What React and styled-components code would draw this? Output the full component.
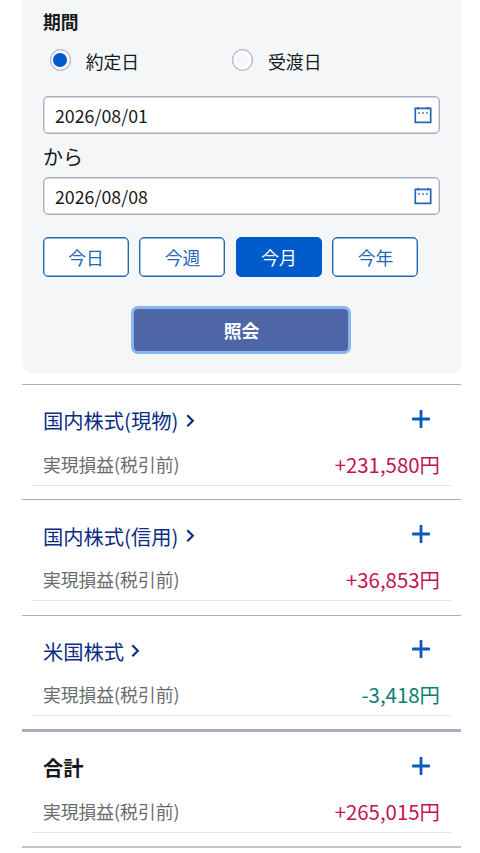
import React, { useState } from 'react';
import styled, { createGlobalStyle } from 'styled-components';

const GlobalStyle = createGlobalStyle`
  * {
    box-sizing: border-box;
  }
  body {
    margin: 0;
    background: #ffffff;
    color: #17191c;
    font-family: 'Noto Sans CJK JP', 'Noto Sans', sans-serif;
    overflow: hidden;
  }
  button {
    font-family: inherit;
    padding: 0;
    cursor: pointer;
  }
`;

const Page = styled.main`
  width: 480px;
  height: 853px;
  padding: 0 18.7px 0 21.6px;
  overflow: hidden;
`;

const SearchPanel = styled.form`
  height: 373px;
  padding: 0 21.4px;
  background: #f4f6f8;
  border-radius: 0 0 9px 9px;
`;

const Heading = styled.h2`
  margin: 0;
  height: 44px;
  font-size: 17.8px;
  font-weight: 700;
  line-height: 42px;
`;

const RadioRow = styled.div`
  display: grid;
  grid-template-columns: 182.3px 1fr;
  height: 52.4px;
  padding-left: 6.6px;
`;

const RadioLabel = styled.label`
  display: flex;
  align-items: center;
  gap: 14.8px;
  height: 32px;
  font-size: 17.8px;
  line-height: 32px;
`;

const RadioMark = styled.span`
  display: grid;
  place-items: center;
  width: 21.4px;
  height: 21.4px;
  border: 1px solid #a7adbb;
  border-radius: 50%;
  background: #ffffff;
  box-shadow: inset 0 0 0 0.3px #a7adbb;

  &::after {
    content: '';
    width: 13.6px;
    height: 13.6px;
    border-radius: 50%;
    background: ${(props) => (props.$checked ? '#005bcb' : '#f6f7f8')};
  }
`;

const RadioText = styled.span`
  padding-top: 2px;
`;

const DateField = styled.div`
  display: flex;
  align-items: center;
  justify-content: space-between;
  height: 38px;
  padding: 0 6.6px 0 11px;
  border: 1px solid #a9adbd;
  border-radius: 5px;
  background: #ffffff;
  box-shadow: inset 0 0 0 0.4px #a9adbd;
  font-size: 17.8px;
  line-height: 34px;
`;

const FromText = styled.div`
  height: 43px;
  font-size: 20px;
  line-height: 46px;
`;

const PresetRow = styled.div`
  display: flex;
  gap: 10.5px;
  margin-top: 21.3px;
`;

const PresetButton = styled.button`
  width: 86px;
  height: 40.6px;
  border: 1px solid ${(props) => (props.$active ? '#005bcb' : '#1f67b3')};
  border-radius: 5px;
  background: ${(props) => (props.$active ? '#005bcb' : '#ffffff')};
  box-shadow: inset 0 0 0 0.4px ${(props) => (props.$active ? '#005bcb' : '#1f67b3')};
  color: ${(props) => (props.$active ? '#ffffff' : '#1f67b3')};
  font-size: 17.8px;
  line-height: 36px;
`;

const SubmitButton = styled.button`
  display: block;
  width: 220px;
  height: 48px;
  margin: 29px auto 0;
  padding-top: 1px;
  border: 3px solid #88b7ee;
  border-radius: 7px;
  background: #4e66a8;
  color: #ffffff;
  font-size: 17.8px;
  font-weight: 700;
  line-height: 41px;
`;

const Results = styled.div`
  margin-top: 11px;
  border-bottom: 2px solid #c0c4cd;
`;

const Section = styled.section`
  height: ${(props) => (props.$total ? '116.8px' : '115.3px')};
  margin-top: ${(props) => (props.$total ? '-0.6px' : '0')};
  padding: 0 10.7px;
  border-top: ${(props) => (props.$total ? '3px solid #a9acc2' : '1px solid #a9adbd')};
`;

const SectionHead = styled.div`
  display: flex;
  align-items: center;
  justify-content: space-between;
  height: 69.1px;
  padding: 0 20.8px 0 10.7px;
`;

const Title = styled.a`
  display: flex;
  align-items: center;
  gap: 7.2px;
  padding-top: ${(props) => (props.$total ? '0.6px' : '1.4px')};
  color: ${(props) => (props.$total ? '#17191c' : '#0c2d83')};
  font-size: 20.3px;
  font-weight: ${(props) => (props.$total ? 700 : 400)};
  line-height: 30px;
`;

const ToggleButton = styled.button`
  display: flex;
  width: 18px;
  height: 18px;
  margin-bottom: 2px;
  border: 0;
  background: none;
`;

const ProfitRow = styled.div`
  display: flex;
  align-items: center;
  justify-content: space-between;
  height: 31.5px;
  padding: 0 10.7px 11.5px;
  border-bottom: 1px solid #e0e5e8;
  line-height: 20px;
`;

const ProfitLabel = styled.span`
  color: #686b70;
  font-size: 17.8px;
`;

const ProfitValue = styled.span`
  color: ${(props) => (props.$negative ? '#087f72' : '#c4124f')};
  font-size: 20.4px;
`;

function CalendarIcon() {
  return (
    <svg width="18" height="18" viewBox="0 0 18 18" fill="none">
      <path d="M1.3 2.4h15.4v14H1.3z" stroke="#1f67b3" strokeWidth="1.7" />
      <path d="M4.1 0.9v2.4M13.9 0.9v2.4" stroke="#1f67b3" strokeWidth="1.7" />
      <path d="M4.3 7h1.6M8.2 7h1.6M12.1 7h1.6" stroke="#1f67b3" strokeWidth="1.6" />
    </svg>
  );
}

function ChevronIcon() {
  return (
    <svg width="9" height="13" viewBox="0 0 9 13" fill="none">
      <path d="M1.3 1.2 6.8 6.8l-5.5 5.4" stroke="#0c2d83" strokeWidth="2.2" />
    </svg>
  );
}

function PlusIcon() {
  return (
    <svg width="18" height="18" viewBox="0 0 18 18" fill="none">
      <path d="M9 1v16M1 9h16" stroke="#0b59b8" strokeWidth="2.8" strokeLinecap="round" />
    </svg>
  );
}

const presets = ['今日', '今週', '今月', '今年'];

const rows = [
  { title: '国内株式(現物)', value: '+231,580円' },
  { title: '国内株式(信用)', value: '+36,853円' },
  { title: '米国株式', value: '-3,418円' },
  { title: '合計', value: '+265,015円', total: true },
];

function App() {
  const [dateType, setDateType] = useState('約定日');
  const [preset, setPreset] = useState('今月');

  return (
    <>
      <GlobalStyle />
      <Page>
        <SearchPanel onSubmit={(e) => e.preventDefault()}>
          <Heading>期間</Heading>
          <RadioRow>
            {['約定日', '受渡日'].map((label) => (
              <RadioLabel key={label} onClick={() => setDateType(label)}>
                <RadioMark $checked={dateType === label} />
                <RadioText>{label}</RadioText>
              </RadioLabel>
            ))}
          </RadioRow>
          <DateField>
            2026/08/01
            <CalendarIcon />
          </DateField>
          <FromText>から</FromText>
          <DateField>
            2026/08/08
            <CalendarIcon />
          </DateField>
          <PresetRow>
            {presets.map((label) => (
              <PresetButton
                key={label}
                type="button"
                $active={preset === label}
                onClick={() => setPreset(label)}
              >
                {label}
              </PresetButton>
            ))}
          </PresetRow>
          <SubmitButton type="submit">照会</SubmitButton>
        </SearchPanel>
        <Results>
          {rows.map(({ title, value, total }) => (
            <Section key={title} $total={total}>
              <SectionHead>
                <Title $total={total}>
                  {title}
                  {!total && <ChevronIcon />}
                </Title>
                <ToggleButton type="button" aria-label="詳細を開く">
                  <PlusIcon />
                </ToggleButton>
              </SectionHead>
              <ProfitRow>
                <ProfitLabel>実現損益(税引前)</ProfitLabel>
                <ProfitValue $negative={value.startsWith('-')}>{value}</ProfitValue>
              </ProfitRow>
            </Section>
          ))}
        </Results>
      </Page>
    </>
  );
}

export default App;
